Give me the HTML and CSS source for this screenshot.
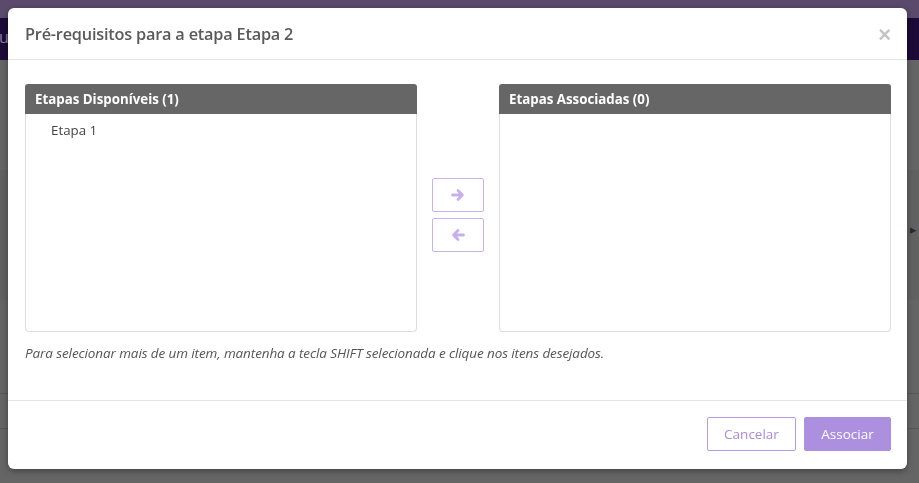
FILE: index.html
```html
<!DOCTYPE html>
<html lang="pt-BR">
<head>
  <meta charset="UTF-8">
  <title>Pré-requisitos</title>
  <link rel="stylesheet" href="styles.css">
</head>
<body>
  <div class="page">
    <div class="topline"></div>
    <div class="navbar"><span class="nav-text">u</span></div>
    <div class="content">
      <div class="content-band"></div>
      <div class="content-row"></div>
      <div class="content-row"></div>
      <span class="pager-arrow">&#9656;</span>
    </div>
  </div>

  <div class="overlay">
    <div class="modal">
      <div class="modal-header">
        <h4 class="modal-title">Pré-requisitos para a etapa Etapa 2</h4>
        <button class="close" type="button">&times;</button>
      </div>

      <div class="modal-body">
        <div class="picker">
          <div class="panel">
            <div class="panel-heading">Etapas Disponíveis (1)</div>
            <ul class="panel-list">
              <li>Etapa 1</li>
            </ul>
          </div>

          <div class="move-buttons">
            <button class="btn-move" type="button">
              <svg width="14" height="14" viewBox="0 0 14 14"><path d="M1.5 7h9M7 2.6L11.4 7 7 11.4" fill="none" stroke="currentColor" stroke-width="2.8" stroke-linecap="round" stroke-linejoin="round"/></svg>
            </button>
            <button class="btn-move" type="button">
              <svg width="14" height="14" viewBox="0 0 14 14"><path d="M12.5 7h-9M7 2.6L2.6 7 7 11.4" fill="none" stroke="currentColor" stroke-width="2.8" stroke-linecap="round" stroke-linejoin="round"/></svg>
            </button>
          </div>

          <div class="panel">
            <div class="panel-heading">Etapas Associadas (0)</div>
            <ul class="panel-list"></ul>
          </div>
        </div>
        <p class="help">Para selecionar mais de um item, mantenha a tecla SHIFT selecionada e clique nos itens desejados.</p>
      </div>

      <div class="modal-footer">
        <button class="btn btn-outline" type="button">Cancelar</button>
        <button class="btn btn-primary" type="button">Associar</button>
      </div>
    </div>
  </div>
</body>
</html>
```

FILE: styles.css
```css
* { box-sizing: border-box; }
body { margin: 0; background: #656565; font-family: "Open Sans", "Noto Sans", sans-serif; color: #555; }

.page { height: 483px; overflow: hidden; }
.topline { height: 18px; background: #5b4a6b; }
.navbar { height: 42px; background: #1c0a38; color: #8a7fa0; font-size: 16px; padding: 8px 0 0 0; }
.nav-text { margin-left: -1px; }
.content { position: relative; padding-top: 110px; }
.content-band { height: 130px; background: #616161; margin-bottom: 93px; }
.content-row { height: 1px; background: #575757; margin-bottom: 34px; }
.pager-arrow { position: absolute; right: 2px; top: 160px; color: #2a2a2a; font-size: 13px; }

.overlay { position: fixed; inset: 0; padding: 8px; }
.modal {
  width: 899px; height: 461px; background: #fff; border-radius: 6px;
  box-shadow: 0 2px 6px rgba(0,0,0,0.35);
  display: flex; flex-direction: column;
}

.modal-header {
  height: 52px; border-bottom: 1px solid #e5e5e5;
  display: flex; align-items: center; justify-content: space-between;
  padding: 0 16px 0 17px;
}
.modal-title { margin: 0; font-size: 16.3px; font-weight: 600; color: #5a5a5a; letter-spacing: -0.2px; }
.close { background: none; border: none; color: #c4c4c4; font-size: 22px; font-weight: bold; padding: 0; margin-top: 3px; line-height: 1; cursor: pointer; }

.modal-body { flex: 1; padding: 24px 16px 0 17px; border-bottom: 1px solid #e5e5e5; }
.picker { display: flex; gap: 15px; }
.panel { width: 392px; display: flex; flex-direction: column; }
.panel-heading {
  height: 30px; background: #666; color: #fff; font-weight: bold; font-size: 13.3px;
  padding: 0 10px; display: flex; align-items: center; border-radius: 3px 3px 0 0;
}
.panel-list {
  height: 218px; margin: 0; padding: 6px 0 0 25px; list-style: none;
  border: 1px solid #ddd; border-top: none; border-radius: 0 0 4px 4px;
  font-size: 13.3px; color: #444;
}
.panel-list li { line-height: 20px; }

.move-buttons { width: 52px; padding-top: 94px; display: flex; flex-direction: column; gap: 6px; }
.btn-move {
  width: 52px; height: 34px; background: #fff; border: 1px solid #c9b3ee; border-radius: 2px;
  color: #c7aeee; display: flex; align-items: center; justify-content: center; padding: 0;
}

.help { margin: 12px 0 0 0; font-size: 13.5px; font-style: italic; color: #555; letter-spacing: -0.1px; }

.modal-footer { height: 68px; display: flex; justify-content: flex-end; align-items: flex-start; gap: 8px; padding: 16px 16px 0 0; }
.btn { height: 34px; font-family: inherit; font-size: 13.5px; border-radius: 2px; cursor: pointer; }
.btn-outline { width: 89px; background: #fff; border: 1px solid #b89be6; color: #a98bd9; }
.btn-primary { width: 87px; background: #ad8fe0; border: 1px solid #ad8fe0; color: #fff; }
```
